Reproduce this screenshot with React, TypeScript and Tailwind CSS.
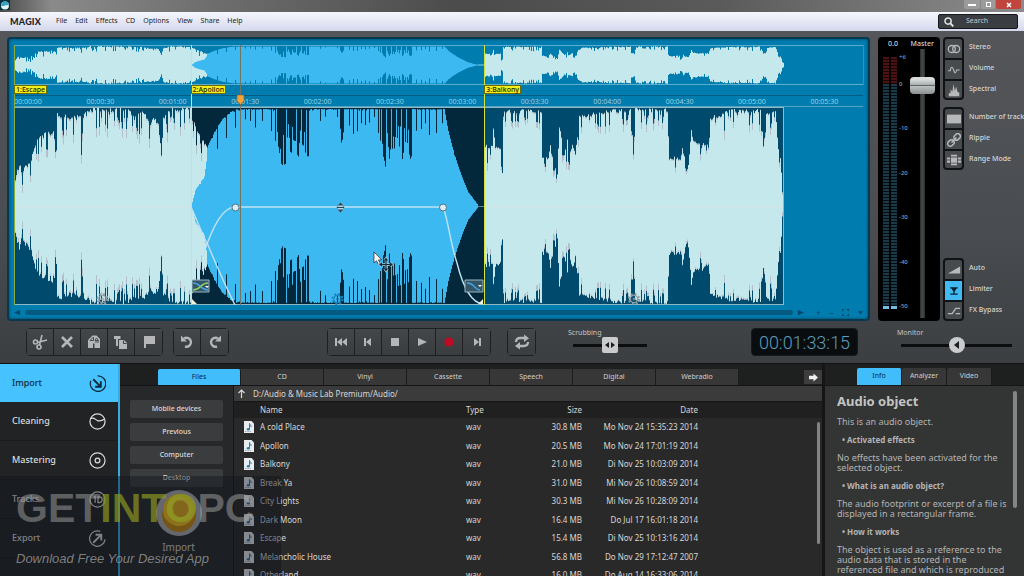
import type { ReactNode } from 'react';
import clsx from 'clsx';

type Point = [number, number];

const MENU = ['File', 'Edit', 'Effects', 'CD', 'Options', 'View', 'Share', 'Help'];

const TIMES = [
  '00:00:00', '00:00:30', '00:01:00', '00:01:30', '00:02:00', '00:02:30',
  '00:03:00', '00:03:30', '00:04:00', '00:04:30', '00:05:00', '00:05:30',
];

const SOURCES = ['Files', 'CD', 'Vinyl', 'Cassette', 'Speech', 'Digital', 'Webradio'];

const FILES = [
  { name: 'A cold Place', size: '30.8 MB', date: 'Mo Nov 24 15:35:23 2014' },
  { name: 'Apollon', size: '20.5 MB', date: 'Mo Nov 24 17:01:19 2014' },
  { name: 'Balkony', size: '21.0 MB', date: 'Di Nov 25 10:03:09 2014' },
  { name: 'Break Ya', size: '31.0 MB', date: 'Mi Nov 26 10:08:59 2014' },
  { name: 'City Lights', size: '30.3 MB', date: 'Mi Nov 26 10:28:09 2014' },
  { name: 'Dark Moon', size: '16.4 MB', date: 'Do Jul 17 16:01:18 2014' },
  { name: 'Escape', size: '15.4 MB', date: 'Di Nov 25 10:13:16 2014' },
  { name: 'Melancholic House', size: '56.8 MB', date: 'Do Nov 29 17:12:47 2007' },
  { name: 'Otherland', size: '16.0 MB', date: 'Do Aug 14 16:33:06 2014' },
];

/* ---------- waveform data: [x, level 0..100] ---------- */

const ESCAPE: Point[] = [
  [0, 12], [1, 30], [4, 46], [9, 40], [16, 46], [19, 57], [21, 66], [24, 72], [31, 75], [38, 78], [41, 70],
  [42, 60], [43, 95], [60, 92], [66, 95], [67, 72], [68, 92], [76, 100], [110, 100], [120, 95], [127, 96],
  [136, 90], [144, 88], [147, 55], [149, 92], [155, 100], [176, 100], [183, 80], [190, 68], [193, 62],
];

const APOLLON: Point[] = [
  [177, 0], [181, 16], [186, 24], [190, 30], [192, 45], [193, 60], [200, 75], [208, 88], [216, 95], [222, 98],
  [430, 98], [434, 76], [438, 60], [443, 43], [449, 26], [454, 14], [464, 1],
];

const BALKONY: Point[] = [
  [470, 62], [478, 62], [479, 82], [481, 62], [486, 60], [488, 34], [489, 98], [527, 98], [528, 50], [534, 50],
  [536, 64], [538, 54], [543, 34], [545, 82], [548, 68], [550, 54], [553, 67], [555, 56], [558, 64], [561, 54],
  [563, 72], [565, 92], [599, 98], [616, 99], [619, 63], [621, 99], [653, 99], [655, 50], [666, 50], [668, 62],
  [671, 46], [674, 42], [677, 80], [679, 68], [694, 64], [696, 90], [716, 98], [746, 98], [749, 64], [752, 94],
  [761, 98], [764, 60], [766, 50], [768, 20], [770, 7],
];

// narrow drops in the selected clip
const DROPS: Point[] = [
  [196, 67], [203, 58], [212, 69], [221, 79], [226, 88], [231, 88], [236, 86], [241, 80], [248, 86],
  [257, 76], [261, 66], [264, 60], [265, 54], [266, 58], [267, 44], [268, 42], [270, 43], [271, 43],
  [276, 56], [277, 54], [280, 66], [283, 52], [284, 50], [288, 62], [291, 54], [293, 52], [294, 52],
  [306, 86], [311, 92], [323, 90], [326, 78], [327, 65], [328, 68], [329, 76], [335, 82], [339, 74], [343, 76],
  [347, 84], [351, 82], [355, 86], [360, 90], [364, 74], [366, 66], [369, 50], [370, 46], [371, 40],
  [375, 48], [380, 58], [385, 60], [388, 48], [389, 54], [395, 52], [396, 48], [397, 50],
  [402, 76], [407, 78], [411, 84], [415, 72], [422, 74], [428, 84],
];

// packed transients: two bars where nearly every column is cut
const DENSE: Point[] = [];
[[262, 295], [366, 398]].forEach(([from, to]) => {
  for (let x = from; x < to; x++) {
    if (x % 5 !== 2) DENSE.push([x, 58 + ((x * 13) % 27)]);
  }
});
const APOLLON_DROPS = [...DROPS, ...DENSE];

function random(seed: number) {
  let s = seed;
  return () => {
    s = (s * 16807) % 2147483647;
    return s / 2147483647;
  };
}

function levelAt(points: Point[], x: number) {
  for (let i = 1; i < points.length; i++) {
    const [x0, y0] = points[i - 1];
    const [x1, y1] = points[i];
    if (x <= x1) return y0 + ((y1 - y0) * (x - x0)) / (x1 - x0);
  }
  return 0;
}

function wavePath(points: Point[], half: number, seed: number, noise: number, drops?: Point[]) {
  const rnd = random(seed);
  const start = points[0][0];
  const end = points[points.length - 1][0];
  const top: string[] = [];
  const bottom: string[] = [];
  for (let x = start; x < end; x++) {
    let level = levelAt(points, x);
    const drop = drops?.find(d => d[0] === x);
    if (drop) level = Math.min(level, drop[1]);
    const r = rnd();
    const spike = r > 0.7 ? ((r - 0.7) / 0.3) * noise * 1.8 : 0;
    const up = Math.max(1, level - rnd() * noise * 0.45 - spike);
    const down = Math.max(1, level - rnd() * noise * 0.45 - spike * 0.9);
    top.push(`L${x} ${(half - (up / 100) * half).toFixed(1)}H${x + 1}`);
    bottom.unshift(`L${x + 1} ${(half + (down / 100) * half).toFixed(1)}H${x}`);
  }
  return `M${start} ${half}${top.join('')}${bottom.join('')}Z`;
}

/* ---------- small drawings ---------- */

function Svg({ children, className, box = 16 }: { children: ReactNode; className?: string; box?: number }) {
  return (
    <svg viewBox={`0 0 ${box} ${box}`} className={className ?? 'size-4'} fill="currentColor" aria-hidden="true">
      {children}
    </svg>
  );
}

function Gear({ x, color }: { x: number; color: string }) {
  return (
    <g transform={`translate(${x} 192)`} fill="none" stroke={color}>
      <circle r="5" strokeWidth="2" strokeDasharray="2 1.93" />
      <circle r="3.6" strokeWidth="1.2" />
      <circle r="1" strokeWidth="1" />
    </g>
  );
}

function Overview() {
  return (
    <svg viewBox="0 0 849 38" preserveAspectRatio="none" className="block h-[38px] w-full" aria-label="Overview">
      <path d={wavePath(ESCAPE, 19, 11, 14)} fill="#c5e8ec" />
      <path d={wavePath(APOLLON, 19, 5, 1, APOLLON_DROPS)} fill="#3db9f2" />
      <path d={wavePath(BALKONY, 19, 23, 12)} fill="#c5e8ec" />
      <path d="M464 19h6" stroke="#8fd0e6" />
    </svg>
  );
}

function Waveform() {
  return (
    <svg viewBox="0 0 849 198" preserveAspectRatio="none" className="block h-[198px] w-full" aria-label="Waveform">
      <path d="M0 0h770v198H0z" fill="#004b6d" />
      <path d="M177 0h293v198H177z" fill="#03273b" />
      <path d={wavePath(ESCAPE, 99, 7, 12)} fill="#b3bfcb" />
      <path d={wavePath(ESCAPE, 99, 7, 17)} fill="#c5e8ec" />
      <path d={wavePath(BALKONY, 99, 31, 9)} fill="#b3bfcb" />
      <path d={wavePath(BALKONY, 99, 31, 13)} fill="#c5e8ec" />
      <path d={wavePath(APOLLON, 99, 3, 1, APOLLON_DROPS)} fill="#3db9f2" />
      <path d="M0 99.5h177M470 99.5h300" stroke="#dfe2dc" strokeWidth="1" opacity=".7" />
      <path d="M464 99.5h6" stroke="#5d8294" />
      <path d="M0 .5h770M0 197.5h770M769.5 0v198" stroke="#8fb9c6" fill="none" />

      {/* volume and fade curves */}
      <g fill="none" stroke="#bfe3f3" strokeWidth="1.4">
        <path d="M177 100C186 120 190 132 194 138C203 160 213 182 221 198" />
        <path d="M188 152C196 126 207 100 221 100H429C434 112 436 135 443 156C449 180 458 196 469 197" />
      </g>
      <circle cx="221.5" cy="100.5" r="3.5" fill="#d9eef7" stroke="#56707d" />
      <circle cx="429" cy="100.5" r="3.5" fill="#d9eef7" stroke="#56707d" />
      <circle cx="326.5" cy="100.5" r="3.5" fill="#a8d9ee" stroke="#6f97aa" />
      <path d="M326.500 95.500l2.500 3h-5zM326.500 105.500l2.500-3h-5zM323 100h7v1h-7z" fill="#2c4350" />

      {/* fade handles */}
      <g>
        <path d="M178 173h17v12h-17z" fill="#33566a" stroke="#9db4bd" />
        <path d="M179 176c8 0 7 7 15 7" fill="none" stroke="#4aa3e0" strokeWidth="1.5" />
        <path d="M179 183c8 0 7-7 15-7" fill="none" stroke="#8ed05a" strokeWidth="1.5" />
        <path d="M191 179h4l-2 2z" fill="#fff" />
        <path d="M451 173h18v12h-18z" fill="#33566a" stroke="#9db4bd" />
        <path d="M453 176c8 0 7 7 13 7" fill="none" stroke="#4aa3e0" strokeWidth="1.5" />
        <path d="M464 178h4l-2 2z" fill="#fff" />
        <path d="M178 192l5 5h-5zM469 192l-5 5h5z" fill="#f2f2d8" />
      </g>
      <Gear x={88.5} color="#8f9ea6" />
      <Gear x={323.5} color="#1784bd" />
      <Gear x={620} color="#8f9ea6" />

      {/* pointer */}
      <path d="M360 145v11l2.500-2.300 1.800 3.700 1.900-.9-1.800-3.600h3.300z" fill="#fff" stroke="#222" strokeWidth=".7" />
      <path d="M372 152v11M366.500 157.500h11M370.500 153.500l1.500-2 1.500 2M370.500 161.500l1.500 2 1.500-2M368 156l-2 1.500 2 1.500M376 156l2 1.500-2 1.500" fill="none" stroke="#9fd0e6" strokeWidth="2.6" />
      <path d="M372 152v11M366.500 157.500h11M370.500 153.500l1.500-2 1.500 2M370.500 161.500l1.500 2 1.500-2M368 156l-2 1.500 2 1.500M376 156l2 1.500-2 1.500" fill="none" stroke="#1b2a33" strokeWidth="1.2" />
    </svg>
  );
}

/* ---------- editor ---------- */

function Marker({ className, children }: { className: string; children: ReactNode }) {
  return (
    <span className={clsx('absolute top-[40px] border border-[#6d6a00] bg-[#f3ee1c] px-px text-[7px] leading-[7px] font-medium text-[#222200]', className)}>
      {children}
    </span>
  );
}

function Editor() {
  return (
    <section className="min-w-0 flex-1 rounded border-2 border-[#06384f] bg-[#007cae] px-[5px] pt-[6px] pb-[3px] shadow-[inset_0_0_3px_#033c57]">
      <div className="relative">
        <div className="border-y border-[#58aecd] shadow-[1px_0_0_#2f93bd]">
          <Overview />
        </div>
        <div className="h-[11px] border-b border-[#045c86]" />
        <div className="flex h-[11px] overflow-hidden border-b border-[#4fa3c3] text-[7px] leading-[11px] text-[#9fd0e4]">
          {TIMES.map(time => (
            <span key={time} className="w-[8.53%] shrink-0">
              {time}
            </span>
          ))}
        </div>
        <Waveform />

        <div className="pointer-events-none absolute inset-0">
          <i className="absolute inset-y-0 left-0 w-px bg-[#8ea83c]" />
          <i className="absolute inset-y-0 left-[20.8%] w-px bg-[#e2ee3a]" />
          <i className="absolute inset-y-0 left-[55.4%] w-px bg-[#d3e43a]" />
          <i className="absolute inset-y-0 left-[26.6%] w-px bg-[#6f7467]" />
          <svg viewBox="0 0 9 10" className="absolute top-[50px] left-[26.6%] -ml-1 h-[10px] w-[9px]">
            <path d="M1 0h7v6L4.500 9.500 1 6z" fill="#f2a23a" stroke="#8a5a1a" strokeWidth=".6" />
          </svg>
          <Marker className="left-0">1:Escape</Marker>
          <Marker className="left-[20.8%]">2:Apollon</Marker>
          <Marker className="left-[55.4%]">3:Balkony</Marker>
        </div>
      </div>

      <div className="mt-[3px] flex items-center gap-1 text-[#04486a]">
        <Svg className="size-[7px]" box={8}><path d="M7 1v6L0 4z" /></Svg>
        <div className="h-[5px] w-[90.5%] rounded-sm bg-[#045a80]" />
        <Svg className="size-[7px]" box={8}><path d="M1 1v6l7-3z" /></Svg>
        <div className="flex flex-1 items-center justify-between pl-2 text-[8px] leading-[9px]">
          <span>+</span>
          <span>–</span>
          <Svg className="size-[7px]" box={8}><path d="M0 0h3L0 3zM8 0v3L5 0zM0 8V5l3 3zM8 8H5l3-3z" /></Svg>
          <Svg className="size-[5px]" box={8}><path d="M0 2h8L4 7z" /></Svg>
        </div>
      </div>
    </section>
  );
}

/* ---------- master meter ---------- */

function Meter() {
  return (
    <section className="flex w-[62px] shrink-0 flex-col rounded bg-black px-[5px] pt-[2px] pb-[3px] text-[7px] font-medium">
      <div className="flex justify-between pr-px pl-[5px] leading-[10px] text-[#d5d5d5]">
        <span>0.0</span>
        <label htmlFor="master">Master</label>
      </div>
      <div className="flex min-h-0 flex-1">
        <div className="mt-2 mb-[9px] flex gap-0.5">
          {[0, 1].map(n => (
            <div key={n} className="flex w-[6px] flex-col">
              <div className="h-[27px] bg-[repeating-linear-gradient(#4d1013_0_2px,#1c0506_2px_3px)]" />
              <div className="flex-1 bg-[repeating-linear-gradient(#1a3a49_0_2px,#050d12_2px_3px)]" />
              <div className="h-[3px] bg-[#74bde2]" />
            </div>
          ))}
        </div>
        <div className="ml-0.5 flex flex-1 flex-col pt-[3px] text-[6px] leading-[10px] text-[#6ea3cd]">
          <span className="h-[27px]">+6</span>
          <span className="h-11">0</span>
          <span className="h-[45px]">-10</span>
          <span className="h-11">-20</span>
          <span className="h-[45px]">-30</span>
          <span className="h-11">-40</span>
          <span className="h-2.5">-50</span>
        </div>
        <input
          id="master"
          type="range"
          defaultValue={89}
          className="w-[25px] appearance-none bg-[linear-gradient(90deg,#2b2f2d,#454b48,#2b2f2d)] bg-[length:5px_100%] bg-center bg-no-repeat [direction:rtl] [writing-mode:vertical-lr] [&::-webkit-slider-thumb]:h-[17px] [&::-webkit-slider-thumb]:w-[25px] [&::-webkit-slider-thumb]:appearance-none [&::-webkit-slider-thumb]:rounded-sm [&::-webkit-slider-thumb]:bg-[linear-gradient(#d8dcdb_0_15%,#aab0b0_45%,#5f6666_50%,#b9bfbe_55%,#8b9191)]"
        />
      </div>
    </section>
  );
}

type SideItem = { label: string; icon: ReactNode; on?: boolean };

function SideGroup({ items, className }: { items: SideItem[]; className?: string }) {
  return (
    <div className={className}>
      {items.map(({ label, icon, on }, i) => (
        <button key={label} type="button" className="flex h-[21px] w-full items-center gap-[5px] text-left text-[7px] font-medium whitespace-nowrap text-[#d6d8da]">
          <span
            className={clsx(
              'flex h-full w-[21px] shrink-0 items-center justify-center border-2 border-[#101214]',
              i === 0 && 'rounded-t',
              i === items.length - 1 ? 'rounded-b' : 'border-b-0',
              on ? 'bg-[#41b9f3] text-[#0a2330]' : 'bg-[#484b4e] text-[#b6b8ba]',
            )}
          >
            {icon}
          </span>
          {label}
        </button>
      ))}
    </div>
  );
}

function SideTools() {
  return (
    <aside className="flex w-[81px] shrink-0 flex-col overflow-hidden">
      <SideGroup
        items={[
          { label: 'Stereo', icon: <Svg className="size-3.5"><g fill="none" stroke="currentColor" strokeWidth="1.5"><circle cx="5.5" cy="8" r="4" /><circle cx="10.5" cy="8" r="4" /></g></Svg> },
          { label: 'Volume', icon: <Svg className="size-3"><path d="M0 9h3c1-6 3-6 4.500-1s3 5 4 0h4" fill="none" stroke="currentColor" strokeWidth="1.5" /></Svg> },
          { label: 'Spectral', icon: <Svg className="size-3.5"><path d="M2 15V11l2 1V7l2 3 1.500-9L9 9l1.500-5L12 10l2 1v4z" /></Svg> },
        ]}
      />
      <SideGroup
        className="mt-[7px]"
        items={[
          { label: 'Number of tracks', icon: <Svg className="size-3.5"><path d="M0 3h16v10H0z" /></Svg> },
          { label: 'Ripple', icon: <Svg className="size-3.5"><g fill="none" stroke="currentColor" strokeWidth="1.7" transform="rotate(-45 8 8)"><rect x="-1" y="5" width="8" height="6" rx="3" /><rect x="9" y="5" width="8" height="6" rx="3" /><path d="M4 8h8" /></g></Svg> },
          { label: 'Range Mode', icon: <Svg className="size-3.5"><path d="M4.500 2h7v2h-7zM4.500 5h7v6h-7zM4.500 12h7v2h-7zM0 5h3.500v2.500H0zM0 8.500h3.500V11H0zM12.500 5H16v2.500h-3.500zM12.500 8.500H16V11h-3.500z" /></Svg> },
        ]}
      />
      <SideGroup
        className="mt-auto"
        items={[
          { label: 'Auto', icon: <Svg className="size-3.5"><path d="M1 12h14V4z" /></Svg> },
          { label: 'Limiter', on: true, icon: <Svg className="size-2.5"><path d="M2 2h12v2h-2l-3 5v3h5v2H2v-2h5V9L4 4H2z" /></Svg> },
          { label: 'FX Bypass', icon: <Svg className="size-3.5"><path d="M1 11h5l4-6h5M10 11h5" fill="none" stroke="currentColor" strokeWidth="1.6" /></Svg> },
        ]}
      />
    </aside>
  );
}

/* ---------- transport ---------- */

function ButtonGroup({ items }: { items: { label: string; icon: ReactNode }[] }) {
  return (
    <div className="flex divide-x divide-[#1d1f21] rounded-sm border border-[#1d1f21]">
      {items.map(({ label, icon }) => (
        <button key={label} type="button" aria-label={label} title={label} className="flex h-[26px] w-[27px] items-center justify-center bg-gradient-to-b from-[#43474a] to-[#3a3d40] text-[#b4b6b8]">
          {icon}
        </button>
      ))}
    </div>
  );
}

function Transport() {
  return (
    <div className="grid grid-cols-[auto_1fr_auto] items-start pt-[7px] pr-3 pb-[7px] pl-[26px]">
      <div className="flex gap-[10px]">
        <ButtonGroup
          items={[
            { label: 'Cut', icon: <Svg><g fill="none" stroke="currentColor" strokeWidth="1.6"><circle cx="3.5" cy="8" r="2" /><circle cx="7" cy="13" r="2" /><path d="M5 8.500L15 6M7.500 11L10 1" /></g></Svg> },
            { label: 'Delete', icon: <Svg><path d="M3 3l10 10M13 3L3 13" stroke="currentColor" strokeWidth="2.6" /></Svg> },
            { label: 'Copy', icon: <Svg><path d="M6.500 1.500h4L14 5v9H8.500V9.500H7V14H2V6z" /><path d="M4 6.500L7.500 3v3.500zM9 6.500h3.500L10.500 4zM9 8h4" fill="none" stroke="#3e4144" strokeWidth=".9" /></Svg> },
            { label: 'Paste', icon: <Svg><path d="M1 2h7v3H5v7H3V5H1z" /><path d="M6 6h5l3 3v6H6z" /><path d="M8 1h2v4H8zM10.500 6.500v3h3" fill="none" stroke="#3e4144" /></Svg> },
            { label: 'Marker', icon: <Svg><path d="M3 2h11v8H5v4H3z" /></Svg> },
          ]}
        />
        <ButtonGroup
          items={[
            { label: 'Undo', icon: <Svg><path d="M5 4.500a4.500 4.500 0 1 1 1 8" fill="none" stroke="currentColor" strokeWidth="2.4" /><path d="M2 1.500v6h6z" /></Svg> },
            { label: 'Redo', icon: <Svg><path d="M11 4.500a4.500 4.500 0 1 0-1 8" fill="none" stroke="currentColor" strokeWidth="2.4" /><path d="M14 1.500v6H8z" /></Svg> },
          ]}
        />
      </div>

      <div className="flex pl-[98px]">
        <ButtonGroup
          items={[
            { label: 'To start', icon: <Svg><path d="M2 4h2v8H2zM4 8l5-4v8zM9 8l5-4v8z" /></Svg> },
            { label: 'Back', icon: <Svg><path d="M4 4h2v8H4zM6 8l5-4v8z" /></Svg> },
            { label: 'Stop', icon: <Svg><path d="M4 4h8v8H4z" /></Svg> },
            { label: 'Play', icon: <Svg><path d="M4 4l9 4-9 4z" /></Svg> },
            { label: 'Record', icon: <Svg className="size-4 text-[#c00a24]"><circle cx="8" cy="8" r="4.6" /></Svg> },
            { label: 'Forward', icon: <Svg><path d="M10 4h2v8h-2zM10 8L5 4v8z" /></Svg> },
          ]}
        />
        <div className="ml-4">
          <ButtonGroup
            items={[{ label: 'Loop', icon: <Svg><g fill="none" stroke="currentColor" strokeWidth="2.4"><path d="M2 8c0-3 2-4 4-4h5M14 8c0 3-2 4-4 4H5" /></g><path d="M10 .5l5 3.700L10 8zM6 8v7.500L1 12z" /></Svg> }]}
          />
        </div>
        <div className="ml-8 flex flex-col text-[7px] leading-[9px] text-[#c2c4c6]">
          <label htmlFor="scrub">Scrubbing</label>
          <div className="relative ml-[5px] flex">
            <input
              id="scrub"
              type="range"
              className="h-4 w-[74px] appearance-none bg-[linear-gradient(#0c0d0e,#0c0d0e)] bg-[length:100%_3px] bg-center bg-no-repeat [&::-webkit-slider-thumb]:size-4 [&::-webkit-slider-thumb]:appearance-none [&::-webkit-slider-thumb]:rounded-xs [&::-webkit-slider-thumb]:bg-[#c9cbcc]"
            />
            <span className="pointer-events-none absolute inset-0 flex items-center justify-center text-[#1c1e20]">
              <Svg className="size-3" box={12}><path d="M5 3v6L1 6zM7 3v6l4-3z" /></Svg>
            </span>
          </div>
        </div>
      </div>

      <div className="flex">
        <output className="flex h-7 w-[107px] items-center justify-center rounded-sm border border-[#17191a] bg-[#0a0d10] font-[Roboto,sans-serif] text-[18px] font-light text-[#5c9dba]">
          00:01:33:15
        </output>
        <div className="ml-[39px] flex flex-col text-[7px] leading-[9px] text-[#c2c4c6]">
          <label htmlFor="monitor">Monitor</label>
          <div className="relative ml-1 flex">
            <input
              id="monitor"
              type="range"
              className="h-4 w-[111px] appearance-none bg-[linear-gradient(#0c0d0e,#0c0d0e)] bg-[length:100%_3px] bg-center bg-no-repeat [&::-webkit-slider-thumb]:size-4 [&::-webkit-slider-thumb]:appearance-none [&::-webkit-slider-thumb]:rounded-full [&::-webkit-slider-thumb]:bg-[#c9cbcc]"
            />
            <span className="pointer-events-none absolute inset-0 flex items-center justify-center text-[#1c1e20]">
              <Svg className="size-2" box={8}><path d="M6 0v8L1 4z" /></Svg>
            </span>
          </div>
        </div>
      </div>
    </div>
  );
}

/* ---------- lower area ---------- */

const TASKS: { label: string; icon: ReactNode }[] = [
  { label: 'Import', icon: <><path d="M9 1a8.200 8.200 0 1 1-7 5" /><path d="M4.500 4.500L12 12M12.500 6.500v6h-6" strokeWidth="2" /></> },
  { label: 'Cleaning', icon: <><circle cx="9" cy="9" r="8" /><path d="M1.500 6c4-2 5 1 7.500 2s5 0 8-2" /></> },
  { label: 'Mastering', icon: <><circle cx="9" cy="9" r="8" /><circle cx="9" cy="9" r="2.5" /></> },
  { label: 'Tracks', icon: <><circle cx="9" cy="9" r="8" /><path d="M5 7l1.500-1v6.500M9.500 6.300v6H11a3 3 0 0 0 0-6z" /></> },
  { label: 'Export', icon: <><path d="M12 1.500A8.200 8.200 0 1 0 17 10" /><path d="M4.500 13.500L12.500 5.500M7 5h6v6" strokeWidth="2" /></> },
];

function TaskNav() {
  return (
    <nav className="w-[120px] shrink-0 border-r-2 border-[#3aa9de] bg-[#222324]">
      {TASKS.map(({ label, icon }, i) => (
        <button
          key={label}
          type="button"
          className={clsx(
            'flex w-full items-center justify-between pr-3 pl-3 text-[9px] font-medium',
            i === 0 ? 'h-[38px] bg-[#46c3ff] text-[#0b2a3d]' : 'h-[39px] border-b border-[#1c1c1d] text-[#dcdcdc]',
          )}
        >
          {label}
          <svg viewBox="0 0 18 18" className="size-[17px]" fill="none" stroke="currentColor" strokeWidth="1.3" aria-hidden="true">
            {icon}
          </svg>
        </button>
      ))}
    </nav>
  );
}

function Places() {
  return (
    <div className="flex w-[114px] shrink-0 flex-col border-r border-[#161616] bg-[#272829] px-[10px] pt-[14px]">
      <div className="flex flex-col gap-[5px]">
        {['Mobile devices', 'Previous', 'Computer', 'Desktop'].map(place => (
          <button key={place} type="button" className="h-[18px] rounded-xs bg-[#3b3c3d] text-[7px] font-medium text-[#dedede]">
            {place}
          </button>
        ))}
      </div>
      <button type="button" className="mt-[3px] flex flex-col items-center self-center pl-1 text-[10px] leading-[14px] text-[#d5d5d5]">
        <svg viewBox="0 0 46 46" className="size-[46px]" aria-hidden="true">
          <circle cx="23" cy="23" r="23" fill="#a9acb0" />
          <circle cx="23" cy="25" r="17" fill="#c98a10" />
          <circle cx="23" cy="20" r="16" fill="#f5c01c" />
          <circle cx="23" cy="19" r="12.5" fill="#ffe23a" />
          <circle cx="24" cy="19" r="8.5" fill="#dfa91c" />
        </svg>
        <span className="mt-1">Import</span>
      </button>
    </div>
  );
}

function FileIcon() {
  return (
    <svg viewBox="0 0 10 12" className="block h-3 w-2.5" aria-hidden="true">
      <path d="M0 0h7.500L10 2.500V12H0z" fill="#e8ecee" />
      <path d="M5.500 2.500c.3 1.500 2 1.500 1.500 3.500M5.500 2.500v6" fill="none" stroke="#2b7fae" />
      <ellipse cx="4.3" cy="8.3" rx="1.6" ry="1.2" fill="#2b7fae" />
      <path d="M1 10.500h6" stroke="#9aa3a8" strokeDasharray="1 .6" />
    </svg>
  );
}

function FileList() {
  return (
    <div className="flex min-w-0 flex-1 flex-col bg-[#292929] text-[8px] text-[#d8d8d8]">
      <div className="flex h-4 shrink-0 items-center gap-[7px] border-b border-[#171717] bg-[#3b3b3b] px-[3px]">
        <Svg className="size-[9px]" box={9}><path d="M4.500 9V1M1.500 4l3-3 3 3" fill="none" stroke="currentColor" strokeWidth="1.2" /></Svg>
        D:/Audio &amp; Music Lab Premium/Audio/
      </div>
      <div className="relative min-h-0 flex-1 overflow-hidden">
        <table className="w-full table-fixed">
          <colgroup>
            <col />
            <col className="w-[58px]" />
            <col className="w-[58px]" />
            <col className="w-[116px]" />
            <col className="w-[124px]" />
          </colgroup>
          <thead className="bg-[#202020]">
            <tr className="h-4">
              <th className="pl-[26px] text-left font-normal">Name</th>
              <th className="text-left font-normal">Type</th>
              <th className="text-right font-normal">Size</th>
              <th className="text-right font-normal">Date</th>
              <td />
            </tr>
          </thead>
          <tbody>
            {FILES.map(file => (
              <tr key={file.name} className="h-[18px] even:h-[19px]">
                <td className="p-0 pl-[10px]">
                  <span className="flex items-center gap-1.5 whitespace-nowrap">
                    <FileIcon />
                    {file.name}
                  </span>
                </td>
                <td>wav</td>
                <td className="text-right">{file.size}</td>
                <td className="text-right whitespace-nowrap">{file.date}</td>
                <td />
              </tr>
            ))}
          </tbody>
        </table>
        <i className="absolute top-5 right-[2px] h-[122px] w-[3px] rounded-full bg-[#838383]" />
      </div>
    </div>
  );
}

function Browser() {
  return (
    <section className="flex min-w-0 flex-1 flex-col">
      <div className="flex h-[22px] shrink-0 items-end border-b border-[#141414] bg-[#1e1f1f] pl-[38px] text-[7px]">
        {SOURCES.map((name, i) => (
          <button
            key={name}
            type="button"
            className={clsx(
              'h-4 w-[83px] border-r border-[#1b1b1b]',
              i === 0 ? 'rounded-t-xs bg-[#41bdfb] text-[#0b2a3d]' : 'bg-[#373737] text-[#cfcfcf]',
            )}
          >
            {name}
          </button>
        ))}
        <button type="button" aria-label="More sources" className="mb-px ml-auto flex h-3.5 w-[18px] items-center justify-center bg-[#3d3d3d] text-[#f0f0f0]">
          <Svg className="size-[9px]" box={8}><path d="M0 2.500h4V.5L8 4 4 7.500v-2H0z" /></Svg>
        </button>
      </div>
      <div className="flex min-h-0 flex-1">
        <Places />
        <FileList />
      </div>
    </section>
  );
}

function Info() {
  return (
    <section className="flex w-[202px] shrink-0 flex-col border-l-[3px] border-[#151515] bg-[#333434]">
      <div className="flex h-[22px] shrink-0 items-end border-b border-[#161616] bg-[#1e1f1f] pl-8 text-[7px]">
        {['Info', 'Analyzer', 'Video'].map((name, i) => (
          <button
            key={name}
            type="button"
            className={clsx(
              'h-[17px] w-[45px] rounded-t-xs border-r border-[#1b1b1b]',
              i === 0 ? 'bg-[#41bdfb] text-[#0b2a3d]' : 'bg-[#373737] text-[#cfcfcf]',
            )}
          >
            {name}
          </button>
        ))}
      </div>
      <div className="relative min-h-0 flex-1 overflow-hidden pt-[6px] pr-3 pl-3 text-[9px] leading-[10px] text-[#b5b5b5]">
        <h1 className="text-[13px] leading-[18px] font-bold text-[#c4c4c4]">Audio object</h1>
        <div className="mt-[7px] flex flex-col gap-2">
          <p>This is an audio object.</p>
          <h2 className="pl-[5px] text-[8px] font-bold">• Activated effects</h2>
          <p>No effects have been activated for the selected object.</p>
          <h2 className="pl-[5px] text-[8px] font-bold">• What is an audio object?</h2>
          <p>The audio footprint or excerpt of a file is displayed in a rectangular frame.</p>
          <h2 className="pl-[5px] text-[8px] font-bold">• How it works</h2>
          <p>The object is used as a reference to the audio data that is stored in the referenced file and which is reproduced</p>
        </div>
        <i className="absolute top-[5px] right-[7px] h-[117px] w-1 rounded-full bg-[#858585]" />
      </div>
    </section>
  );
}

function Watermark() {
  return (
    <div className="pointer-events-none absolute bottom-0 left-0 h-[100px] w-[281px] overflow-hidden bg-[#10151c]/45 pt-[9px] pl-4 font-['Liberation_Sans',sans-serif] whitespace-nowrap">
      <p className="text-[41px] leading-[46px] font-bold text-[#a3a3a3]/50">
        GET<span className="text-[#8d981f]/70">INTO</span>PC
      </p>
      <p className="mt-5 text-[13px] leading-4 text-[#9a9a9a]/80 italic">Download Free Your Desired App</p>
    </div>
  );
}

export default function App() {
  return (
    <div className="relative flex h-screen flex-col overflow-hidden bg-[#232323] font-['Noto_Sans',sans-serif]">
      <header className="shrink-0">
        <div className="flex h-3 items-start justify-between bg-[linear-gradient(90deg,#4a4a4a,#8a8a8a_5%,#6f6f6f_20%,#4b4b4b_45%,#5a5a5a_70%,#8c8c8c)]">
          <svg viewBox="0 0 10 10" className="size-[10px]" aria-hidden="true">
            <path d="M0 0h10v10H0z" fill="#06303f" />
            <circle cx="5" cy="5.5" r="4" fill="#e6f4f8" />
            <path d="M1 5.500a4 4 0 0 1 8 0c-3-2-5 2-8 0z" fill="#3aa3bf" />
          </svg>
          <div className="flex h-[9px] gap-px pr-[3px] text-white">
            <button type="button" aria-label="Minimize" className="flex w-4 items-center justify-center rounded-b-xs bg-[#9b9b9b]">
              <i className="h-0.5 w-2 bg-white" />
            </button>
            <button type="button" aria-label="Restore" className="flex w-3.5 items-center justify-center rounded-b-xs bg-[#9b9b9b]">
              <i className="size-[5px] border border-white" />
            </button>
            <button type="button" aria-label="Close" className="flex w-[25px] items-center justify-center rounded-b-xs bg-[#c0453c]">
              <Svg className="size-[6px]" box={6}><path d="M1 1l4 4M5 1L1 5" stroke="currentColor" strokeWidth="1.5" /></Svg>
            </button>
          </div>
        </div>
        <div className="flex h-[19px] items-center bg-gradient-to-b from-[#f6f7fc] to-[#d4d8ec] pr-[6px] pl-[10px] text-[#1d1f26]">
          <span className="w-[46px] font-[Lato,sans-serif] text-[9px] font-black tracking-wide">MAGIX</span>
          <nav className="flex gap-2 text-[7px]">
            {MENU.map(item => (
              <button key={item} type="button">{item}</button>
            ))}
          </nav>
          <div className="ml-auto flex h-[15px] w-[80px] items-center gap-3 rounded-xs border border-[#15171a] bg-[#3a3d41] pl-[5px]">
            <Svg className="size-2.5 shrink-0 text-[#e4e4e4]"><circle cx="6.5" cy="6.5" r="5" fill="none" stroke="currentColor" strokeWidth="2.4" /><path d="M10 10l5 5" stroke="currentColor" strokeWidth="3" /></Svg>
            <input aria-label="Search" placeholder="Search" className="w-full min-w-0 bg-transparent text-[7px] text-white outline-none placeholder:text-[#c9c9c9]" />
          </div>
        </div>
      </header>

      <div className="shrink-0 border-b border-[#121212] bg-[linear-gradient(180deg,#54565a,#494c50_60%,#3c3f42)]">
        <div className="flex h-[290px] pt-[6px] pl-[7px]">
          <Editor />
          <div className="w-2 shrink-0" />
          <Meter />
          <div className="w-[3px] shrink-0" />
          <SideTools />
        </div>
        <Transport />
      </div>

      <main className="flex min-h-0 flex-1">
        <TaskNav />
        <Browser />
        <Info />
      </main>

      <Watermark />
    </div>
  );
}
